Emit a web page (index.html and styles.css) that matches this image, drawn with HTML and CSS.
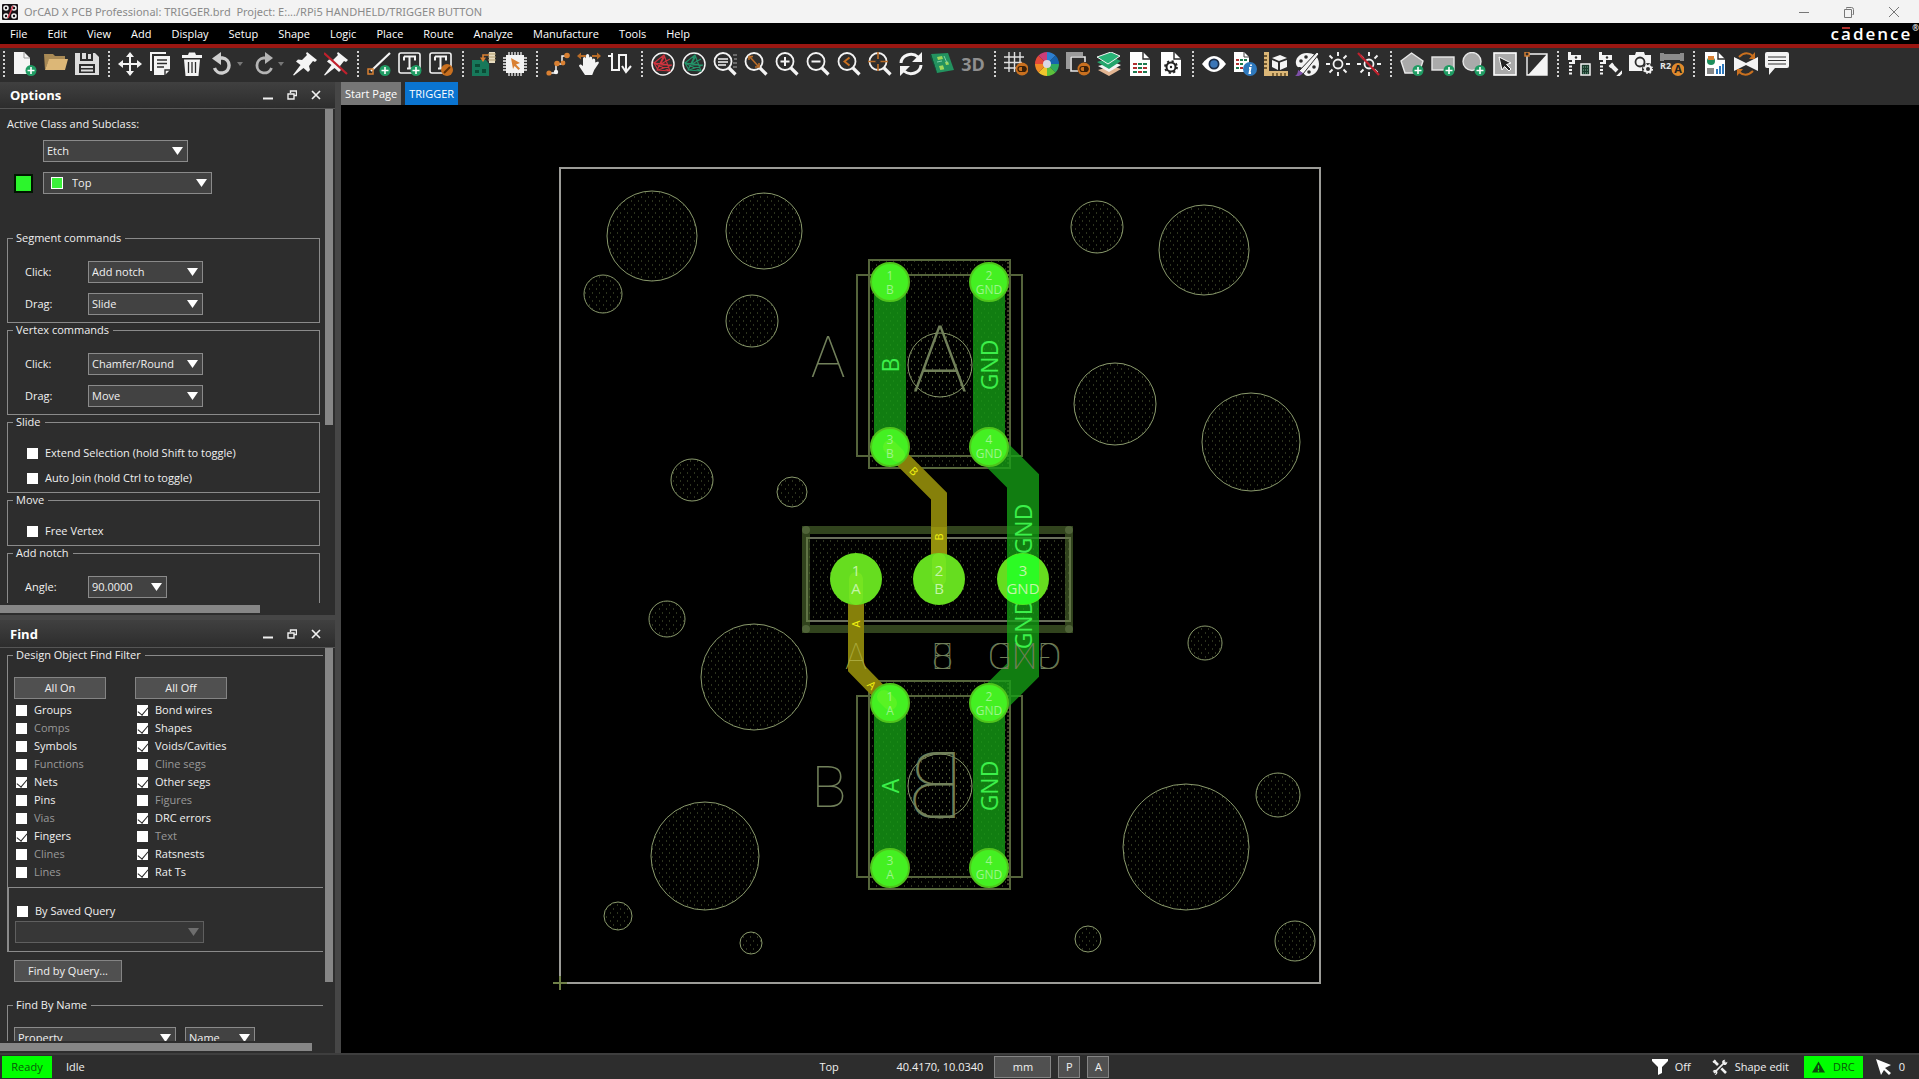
FILE: index.html
```html
<!DOCTYPE html>
<html lang="en">
<head>
<meta charset="utf-8">
<title>OrCAD X PCB Professional: TRIGGER.brd</title>
<link rel="stylesheet" href="styles.css">
</head>
<body>
<svg class="defs" aria-hidden="true">
  <defs>
    <symbol id="plus" viewBox="0 0 24 24"><circle cx="18" cy="18.500" r="5.500" fill="#1f9c63"/><path d="M18 15v7M14.500 18.500h7" stroke="#fff" stroke-width="1.600"/></symbol>
    <symbol id="toggle" viewBox="0 0 24 24"><circle cx="18" cy="17" r="6.500" fill="#c9701f"/><rect x="14" y="14.500" width="8" height="5" rx="2.500" fill="none" stroke="#3a2008" stroke-width="1.200"/><path d="M18 14.500h2a2.500 2.500 0 0 1 0 5h-2z" fill="#3a2008"/></symbol>
    <symbol id="lens" viewBox="0 0 24 24"><circle cx="10" cy="9.500" r="8.500" fill="none" stroke="#f4f4f4" stroke-width="1.800"/><path d="M16 16l6.500 6.500" stroke="#f4f4f4" stroke-width="3.200"/></symbol>
    <symbol id="net" viewBox="0 0 24 24"><circle cx="12" cy="12" r="11" fill="none" stroke="#f4f4f4" stroke-width="1.500"/><path d="M3 11L13 3l6 16-13-1 8-14M3 11l18 2L7 18 3 11l16 8M13 3L6 18M19 7L8 13l13 0" fill="none" stroke="currentColor" stroke-width="1.100"/></symbol>
    <symbol id="restore" viewBox="0 0 10 10"><path d="M3.500 3V1h6v4.500h-2M1 4h6v5H1z" fill="none" stroke="currentColor" stroke-width="1.400"/></symbol>
    <symbol id="close" viewBox="0 0 10 10"><path d="M1 1l8 8M9 1L1 9" stroke="currentColor" stroke-width="1.700"/></symbol>
    <symbol id="minimize" viewBox="0 0 10 10"><path d="M0 8.500h10" stroke="currentColor" stroke-width="2"/></symbol>
    <symbol id="tools" viewBox="0 0 24 24"><path d="M3 3l6 6M14 14l7 7" stroke="currentColor" stroke-width="4"/><path d="M1.500 5l3.500-3.500M3 21L20 4" stroke="currentColor" stroke-width="2.500"/><path d="M15 5a4.500 4.500 0 0 1 5-4l-2 3 2 2 3-2a4.500 4.500 0 0 1-5 5zM1 19a4 4 0 0 1 6-2l1 2a4 4 0 0 1-4 5l2-3-2-2z" fill="currentColor"/></symbol>
    <symbol id="caliper" viewBox="0 0 24 24"><path d="M1 0h3v3h10v5H8v4H5V8H1z" fill="#f4f4f4"/><circle cx="9" cy="5.500" r="1.200" fill="#2d2d2d"/><path d="M3.500 10v14" stroke="#f4f4f4" stroke-width="3" stroke-dasharray="2 1.500"/></symbol>
    <symbol id="sheet" viewBox="0 0 24 24"><path d="M2 0h13l7 7v17H2z" fill="#fff"/><path d="M15 0v7h7" fill="none" stroke="#2d2d2d" stroke-width="1.400"/></symbol>
    <symbol id="burst" viewBox="0 0 24 24"><circle cx="12" cy="12" r="4.500" fill="none" stroke="#f4f4f4" stroke-width="1.800"/><path d="M12 0v4M12 20v4M0 12h4M20 12h4M3.500 3.500l3 3M17.500 17.500l3 3M3.500 20.500l3-3M17.500 6.500l3-3" stroke="#f4f4f4" stroke-width="1.900"/></symbol>
    <symbol id="pin" viewBox="0 0 24 24"><path d="M14 0l10 8-2 2-2-1-4 5 1 4-2 2-4.500-4L1 23.500 0 23l7.500-10L3 9.500l2-2 4 .5 5-5-1-1.500z" fill="#f4f4f4"/></symbol>
    <symbol id="tbox" viewBox="0 0 24 24"><rect x="1" y="1" width="21" height="20" rx="2" fill="none" stroke="#f4f4f4" stroke-width="1.600"/><path d="M6 4.500h11v4M6 8.500v-4M11.500 4.500v12M9 16.500h5" fill="none" stroke="#f4f4f4" stroke-width="2"/></symbol>
    <pattern id="dots" width="7" height="8" patternUnits="userSpaceOnUse"><path d="M1 1h1M4 5h1" stroke="#59683c" stroke-width="1"/></pattern>
  </defs>
</svg>

<header class="titlebar">
  <svg class="appicon" viewBox="0 0 16 16"><rect width="16" height="16" rx="1" fill="#181216"/><g fill="none" stroke="#f3f3f3" stroke-width="1.600"><circle cx="4" cy="4" r="2"/><circle cx="12" cy="4" r="2"/><circle cx="4" cy="12" r="2"/><circle cx="12" cy="12" r="2"/></g><path d="M6 14L11 2" stroke="#d23c50" stroke-width="1.500"/></svg>
  <h1 class="title">OrCAD X PCB Professional: TRIGGER.brd&nbsp; Project: E:.../RPi5 HANDHELD/TRIGGER BUTTON</h1>
  <div class="winbtns">
    <button type="button" aria-label="Minimize"><svg viewBox="0 0 12 12"><path d="M1 6.500h10" stroke="#777"/></svg></button>
    <button type="button" aria-label="Restore"><svg viewBox="0 0 12 12"><path d="M3.500 2.500v-1h5q2 0 2 2v5h-1M1.500 3.500h7v8h-7z" fill="none" stroke="#777"/></svg></button>
    <button type="button" aria-label="Close"><svg viewBox="0 0 12 12"><path d="M1 1l10 10M11 1L1 11" stroke="#777"/></svg></button>
  </div>
</header>

<nav class="menubar">
  <a href="#">File</a><a href="#">Edit</a><a href="#">View</a><a href="#">Add</a><a href="#">Display</a><a href="#">Setup</a><a href="#">Shape</a><a href="#">Logic</a><a href="#">Place</a><a href="#">Route</a><a href="#">Analyze</a><a href="#">Manufacture</a><a href="#">Tools</a><a href="#">Help</a>
  <span class="brand">c<span class="bar">a</span>dence<sup>®</sup></span>
</nav>

<div class="toolbar">
  <i class="sep"></i>
  <button type="button" aria-label="New"><svg viewBox="0 0 24 24"><path d="M1 0h10l6 6v16H1z" fill="#f4f4f4"/><path d="M11 0v6h6" fill="none" stroke="#999"/><use href="#plus"/></svg></button>
  <button type="button" aria-label="Open"><svg viewBox="0 0 24 24"><path d="M0 2h9l2 2h10v4H5L1 18z" fill="#a98a55"/><path d="M5 7h19l-3 11H1z" fill="#dcb777"/></svg></button>
  <button type="button" aria-label="Save"><svg viewBox="0 0 24 24"><path d="M0 1h20l4 4v18H0z" fill="#dcdcdc"/><path d="M5 1h13v8H5zM4 12h16v9H4z" fill="#2d2d2d"/><path d="M7 1h4v6H7zM13 2h3v5h-3z" fill="#dcdcdc"/><path d="M6 15h12M6 18.500h12" stroke="#dcdcdc" stroke-width="1.800"/></svg></button>
  <i class="sep"></i>
  <button type="button" aria-label="Move"><svg viewBox="0 0 24 24"><path d="M12 3v18M3 12h18" stroke="#f4f4f4" stroke-width="2"/><path d="M12 0l4 5H8zM12 24l4-5H8zM0 12l5-4v8zM24 12l-5-4v8z" fill="#f4f4f4"/></svg></button>
  <button type="button" aria-label="Copy"><svg viewBox="0 0 24 24"><path d="M2 19V1h15" fill="none" stroke="#f4f4f4" stroke-width="2"/><path d="M5 4h16v14l-5 5H5z" fill="#f4f4f4"/><path d="M8 8h10M8 11.500h10M8 15h7M16 23v-5h5" fill="none" stroke="#2d2d2d" stroke-width="1.400"/></svg></button>
  <button type="button" aria-label="Delete"><svg viewBox="0 0 24 24"><path d="M2 3h6l1-2.500h6L16 3h6v3H2z" fill="#f4f4f4"/><path d="M4 7.500h16L18.500 24h-13z" fill="#f4f4f4"/><path d="M8.500 10v11M12 10v11M15.500 10v11" stroke="#2d2d2d" stroke-width="1.300"/></svg></button>
  <button type="button" aria-label="Undo"><svg viewBox="0 0 24 24"><path d="M8 6h3.500a7.500 7.500 0 1 1-8 10" fill="none" stroke="#cfcfcf" stroke-width="3.400"/><path d="M10 0v13L1 6.500z" fill="#cfcfcf"/></svg></button>
  <button type="button" class="drop" aria-label="Undo list"></button>
  <button type="button" aria-label="Redo"><svg viewBox="0 0 24 24"><path d="M15 6h-3.500a7.500 7.500 0 1 0 8 10" fill="none" stroke="#b5b5b5" stroke-width="2.800"/><path d="M13 0v12l8-6z" fill="#b5b5b5"/></svg></button>
  <button type="button" class="drop" aria-label="Redo list"></button>
  <button type="button" aria-label="Fix"><svg viewBox="0 0 24 24"><use href="#pin"/></svg></button>
  <button type="button" aria-label="Unfix"><svg viewBox="0 0 24 24"><use href="#pin"/><path d="M0 1l23 21" stroke="#c0202c" stroke-width="2.200"/></svg></button>
  <i class="sep"></i>
  <button type="button" aria-label="Add line"><svg viewBox="0 0 24 24"><path d="M4 19L23 1" stroke="#f4f4f4" stroke-width="2.200"/><rect x="1" y="17" width="5" height="5" fill="none" stroke="#d98032" stroke-width="1.500"/><use href="#plus"/></svg></button>
  <button type="button" aria-label="Add text"><svg viewBox="0 0 24 24"><use href="#tbox"/><use href="#plus"/></svg></button>
  <button type="button" aria-label="Edit text"><svg viewBox="0 0 24 24"><use href="#tbox"/><circle cx="18" cy="18" r="6" fill="#c9701f"/><path d="M15 21l6-6" stroke="#5b2f08" stroke-width="2"/></svg></button>
  <i class="sep"></i>
  <button type="button" aria-label="Place"><svg viewBox="0 0 24 24"><path d="M0 8h14l3 4v12H0z" fill="#17785a"/><path d="M3 12h5v3H3zM10 17h4v4h-4zM3 18h4v3H3z" fill="#0b4a35"/><path d="M11 9V3h6" fill="none" stroke="#d98032" stroke-width="1.600"/><path d="M8 5.500l3 4.500 3-4.500z" fill="#d98032"/><rect x="17" y="0" width="6" height="11" fill="#e8dcc0"/><path d="M16 2h8M16 5h8M16 8h8" stroke="#b29e70"/></svg></button>
  <button type="button" aria-label="Chip"><svg viewBox="0 0 24 24"><path d="M6 0v24M9 0v24M12 0v24M15 0v24M18 0v24M0 6h24M0 9h24M0 12h24M0 15h24M0 18h24" stroke="#f4f4f4" stroke-width="1.300"/><rect x="3" y="3" width="18" height="18" fill="#f4f4f4"/><path d="M8 6l9 5-4 1.500 4 4-1.500 1.500-4-4L10 17z" fill="#d98032"/></svg></button>
  <i class="sep"></i>
  <button type="button" aria-label="Add connect"><svg viewBox="0 0 24 24"><path d="M3 21h7V12h6V4h5" fill="none" stroke="#f4f4f4" stroke-width="1.500"/><circle cx="3" cy="21" r="2.600" fill="#d98032"/><circle cx="10" cy="20" r="2.200" fill="#f4f4f4"/><circle cx="11" cy="11.500" r="2.800" fill="#d98032"/><circle cx="17" cy="11" r="2.400" fill="#d98032"/><circle cx="21" cy="3.500" r="2.800" fill="#d98032"/></svg></button>
  <button type="button" aria-label="Slide"><svg viewBox="0 0 24 24"><path d="M1 4h8M15 4h8" stroke="#b86c28" stroke-width="2"/><path d="M0 4l4-3.500v7zM24 4l-4-3.500v7z" fill="#b86c28"/><path d="M6 14V6.500a1.500 1.500 0 0 1 3 0V3.500a1.600 1.600 0 0 1 3.200 0V6a1.500 1.500 0 0 1 3 0v2a1.500 1.500 0 0 1 3 0v2.500l3-1q1.500 1 0 2.500l-4 6-2 5H8l-6-9q0-2 2-1.500z" fill="#f4f4f4"/></svg></button>
  <button type="button" aria-label="Delay tune"><svg viewBox="0 0 24 24"><path d="M0 4h4M4 1v17h7V3h7v17" fill="none" stroke="#f4f4f4" stroke-width="2"/><path d="M0 4h5M14 14l4 6 5-6" fill="none" stroke="#f4f4f4" stroke-width="2"/></svg></button>
  <i class="sep"></i>
  <button type="button" class="red" aria-label="Unrats"><svg viewBox="0 0 24 24"><use href="#net"/></svg></button>
  <button type="button" class="teal" aria-label="Rats"><svg viewBox="0 0 24 24"><use href="#net"/></svg></button>
  <button type="button" aria-label="Zoom points"><svg viewBox="0 0 24 24"><use href="#lens"/><path d="M5 7h10M5 10h10M5 13h8" stroke="#f4f4f4" stroke-width="1.500"/><path d="M20 3h4M21 7h3M20 11h4M20 15h4" stroke="#aaa" stroke-width="1.200"/></svg></button>
  <button type="button" aria-label="Zoom fit"><svg viewBox="0 0 24 24"><use href="#lens"/><path d="M6 5l8 9M5 8V4.500h4M15 11v4h-4" fill="none" stroke="#b86c28" stroke-width="1.600"/></svg></button>
  <button type="button" aria-label="Zoom in"><svg viewBox="0 0 24 24"><use href="#lens"/><path d="M10 5v9M5.500 9.500h9" stroke="#f4f4f4" stroke-width="2"/></svg></button>
  <button type="button" aria-label="Zoom out"><svg viewBox="0 0 24 24"><use href="#lens"/><path d="M5.500 9.500h9" stroke="#f4f4f4" stroke-width="2"/></svg></button>
  <button type="button" aria-label="Zoom previous"><svg viewBox="0 0 24 24"><use href="#lens"/><path d="M12.500 5.500l-5 4 5 4" fill="none" stroke="#c9701f" stroke-width="1.900"/></svg></button>
  <button type="button" aria-label="Zoom center"><svg viewBox="0 0 24 24"><use href="#lens"/><path d="M10 0v19M0 9.500h20" stroke="#b86c28" stroke-width="1.700"/><path d="M10 7v5M7.500 9.500h5" stroke="#2d2d2d" stroke-width="2"/></svg></button>
  <button type="button" aria-label="Redraw"><svg viewBox="0 0 24 24"><path d="M2 11a10 9 0 0 1 17-6M22 13a10 9 0 0 1-17 6" fill="none" stroke="#f4f4f4" stroke-width="3"/><path d="M23 0v10H13zM1 24V14h10z" fill="#f4f4f4"/></svg></button>
  <button type="button" aria-label="Board view"><svg viewBox="0 0 24 24"><path d="M1 2l17-1 6 17-17 3z" fill="#23925f"/><path d="M1 2l6 19 .5 2L0 4z" fill="#0d5236"/><path d="M7 5l5-1 1 3-5 1zM15 10l3-.5 1 3-3 .5zM9 14l4-.7 1.300 4-4 .7z" fill="#9fd75a"/><path d="M14 4l3 7M7 10l5-1" stroke="#7fd0a8"/></svg></button>
  <button type="button" class="three" aria-label="3D view">3D</button>
  <i class="sep"></i>
  <button type="button" aria-label="Grid"><svg viewBox="0 0 24 24"><path d="M5 0v20M10.500 0v20M16 0v14M0 5h20M0 10.500h18M0 16h12" stroke="#e0e0e0" stroke-width="1.400"/><use href="#toggle"/></svg></button>
  <button type="button" aria-label="Color"><svg viewBox="0 0 24 24"><path d="M12 12V0a12 12 0 0 1 8.500 3.500z" fill="#2d7fd0"/><path d="M12 12l8.500-8.500A12 12 0 0 1 24 12z" fill="#1663ae"/><path d="M12 12h12a12 12 0 0 1-3.500 8.500z" fill="#2eaa62"/><path d="M12 12l8.500 8.500A12 12 0 0 1 12 24z" fill="#5cc13c"/><path d="M12 12v12a12 12 0 0 1-8.500-3.500z" fill="#f0c52d"/><path d="M12 12l-8.500 8.500A12 12 0 0 1 0 12z" fill="#f18b25"/><path d="M12 12H0a12 12 0 0 1 3.500-8.500z" fill="#e5493a"/><path d="M12 12L3.500 3.500A12 12 0 0 1 12 0z" fill="#cc3d78"/><circle cx="12" cy="12" r="4" fill="#d9d9e6"/></svg></button>
  <button type="button" aria-label="Shadow"><svg viewBox="0 0 24 24"><path d="M0 0h17v4H4v13H0z" fill="#9b9b9b"/><path d="M19 10V5H5v14h7" fill="none" stroke="#e6e6e6" stroke-width="1.600"/><use href="#toggle"/></svg></button>
  <button type="button" aria-label="Layers"><svg viewBox="0 0 24 24"><path d="M1 18l14-4 9 3-12 7z" fill="#e3b592"/><path d="M1 14l15-4 8 3-12 7z" fill="#f4f4f4"/><path d="M0 10l15-5 9 4-12 8z" fill="#24a56c"/><path d="M0 5l14-5 9 4-12 8z" fill="#29b477" stroke="#f4f4f4"/></svg></button>
  <button type="button" aria-label="Reports"><svg viewBox="0 0 24 24"><use href="#sheet"/><path d="M5 12h4M5 16h4M15 16h4M10 20h4" stroke="#b03030" stroke-width="2"/><path d="M10 12h4M15 12h4M10 16h4M5 20h4M15 20h4" stroke="#1d7a4f" stroke-width="2"/></svg></button>
  <button type="button" aria-label="Parameters"><svg viewBox="0 0 24 24"><use href="#sheet"/><circle cx="12" cy="15" r="4.500" fill="none" stroke="#222" stroke-width="2"/><circle cx="12" cy="15" r="6" fill="none" stroke="#222" stroke-width="1.800" stroke-dasharray="2.200 2.500"/><circle cx="12" cy="15" r="1.200" fill="#222"/></svg></button>
  <i class="sep"></i>
  <button type="button" aria-label="Visibility"><svg viewBox="0 0 24 24"><path d="M0 12q6-8 12-8t12 8q-6 8-12 8T0 12z" fill="#fff"/><circle cx="12" cy="12" r="5.500" fill="#1b2c46"/><circle cx="12" cy="12" r="3.800" fill="#3b76b8"/></svg></button>
  <button type="button" aria-label="Show element"><svg viewBox="0 0 24 24"><path d="M1 0h10l5 5v15H1z" fill="#fff"/><path d="M11 0v5h5" fill="none" stroke="#444"/><path d="M3 8h3M3 12h3M7 16h3" stroke="#b03030" stroke-width="2"/><path d="M7 8h3M7 12h3M3 16h3M11 8h3" stroke="#1d7a4f" stroke-width="2"/><circle cx="17" cy="17" r="7" fill="#2f79bd"/><path d="M18 12.500v1.500M16 16h1.500l-1 5H18" fill="none" stroke="#fff" stroke-width="1.800"/></svg></button>
  <button type="button" aria-label="Measure"><svg viewBox="0 0 24 24"><path d="M0 0h5v19h19v5H0z" fill="#dcb777"/><path d="M0 4h3M0 8h3M0 12h3M0 16h3M9 24v-3M13 24v-3M17 24v-3M21 24v-3" stroke="#4d3a18" stroke-width="1.300"/><path d="M8 6l8-3 7 3-8 3zM8 8l6 2.500V18l-6-3zM16 10.500L23 8v7l-7 3z" fill="#f4f4f4"/></svg></button>
  <button type="button" aria-label="Assign color"><svg viewBox="0 0 24 24"><path d="M12 1C4 1 0 7 1 12s5 2 6 4 1 8 6 8 11-4 11-12S18 1 12 1z" fill="#f4f4f4"/><g fill="#2d2d2d"><circle cx="6" cy="9" r="1.800"/><circle cx="11" cy="5" r="1.800"/><circle cx="14" cy="20" r="1.800"/><circle cx="19" cy="15" r="1.800"/></g><path d="M4 19L22 0l2 2L8 22z" fill="#f4f4f4" stroke="#2d2d2d"/><path d="M0 24q3-2 3-6l5 3q-3 4-8 3z" fill="#7d4fa8"/></svg></button>
  <button type="button" aria-label="Highlight"><svg viewBox="0 0 24 24"><use href="#burst"/></svg></button>
  <button type="button" aria-label="Dehighlight"><svg viewBox="0 0 24 24"><use href="#burst"/><path d="M1 1l21 22" stroke="#c0202c" stroke-width="2.200"/></svg></button>
  <i class="sep"></i>
  <button type="button" aria-label="Polygon"><svg viewBox="0 0 24 24"><path d="M11.500 1L23 9l-4 12H5L1 9z" fill="#aaa" stroke="#e8e8e8" stroke-width="1.400"/><use href="#plus"/></svg></button>
  <button type="button" aria-label="Rectangle"><svg viewBox="0 0 24 24"><rect x="1" y="5" width="22" height="13" fill="#aaa" stroke="#e8e8e8" stroke-width="1.400"/><use href="#plus"/></svg></button>
  <button type="button" aria-label="Circle"><svg viewBox="0 0 24 24"><circle cx="10" cy="9.500" r="9" fill="#aaa" stroke="#e8e8e8" stroke-width="1.400"/><use href="#plus"/></svg></button>
  <button type="button" aria-label="Select shape"><svg viewBox="0 0 24 24"><rect x="1" y="1" width="22" height="22" fill="#aaa" stroke="#fff" stroke-width="1.600"/><path d="M6 5l12 6-4.500 1.500L18 17l-2 2-4.500-4.500L9 18z" fill="#222" stroke="#fff"/></svg></button>
  <button type="button" aria-label="Shape void"><svg viewBox="0 0 24 24"><path d="M3 23V2h20v21z" fill="#2d2d2d" stroke="#f4f4f4" stroke-width="1.400"/><path d="M23 2v21H4z" fill="#f4f4f4"/><rect x="1" y="0" width="4" height="4" fill="#2d2d2d" stroke="#d98032" stroke-width="1.400"/></svg></button>
  <i class="sep"></i>
  <button type="button" aria-label="Constraints"><svg viewBox="0 0 24 24"><use href="#caliper"/><rect x="14" y="12" width="9" height="11" fill="#1b3a2c" stroke="#f4f4f4" stroke-width="1.500"/><path d="M16 15h5M16 18h5M16 21h5" stroke="#7fb79a" stroke-dasharray="1 1"/></svg></button>
  <button type="button" aria-label="Constraint modes"><svg viewBox="0 0 24 24"><use href="#caliper"/><svg x="10" y="10" width="14" height="14" viewBox="0 0 24 24" color="#f4f4f4"><use href="#tools"/></svg></svg></button>
  <button type="button" aria-label="Snapshot"><svg viewBox="0 0 24 24"><path d="M0 3h6l1-3h8l1 3h6v16H0z" fill="#f4f4f4"/><circle cx="11" cy="10" r="4.500" fill="none" stroke="#2d2d2d" stroke-width="1.800"/><circle cx="19" cy="17" r="6" fill="#2d2d2d"/><circle cx="19" cy="17" r="3" fill="none" stroke="#f4f4f4" stroke-width="2"/><circle cx="19" cy="17" r="4.300" fill="none" stroke="#f4f4f4" stroke-width="1.500" stroke-dasharray="1.700 1.700"/></svg></button>
  <button type="button" aria-label="Auto rename"><svg viewBox="0 0 24 24"><path d="M0 1h4v1h16V1h4v8h-4V8H4v1H0z" fill="#8c8c8c"/><text x="0" y="17" class="r2">R2</text><circle cx="18" cy="17.500" r="6.500" fill="#e08a2c"/><text x="18" y="21" class="badge">A</text></svg></button>
  <i class="sep"></i>
  <button type="button" aria-label="Design report"><svg viewBox="0 0 24 24"><use href="#sheet"/><circle cx="8" cy="9" r="4" fill="#1d8d5c"/><path d="M5 4h6v4H5z" fill="#d98032"/><path d="M4 16h7v6H4z" fill="#888"/><path d="M14 22v-5M17 22v-8M20 22V12" stroke="#2f79bd" stroke-width="2"/></svg></button>
  <button type="button" aria-label="Cross probe"><svg viewBox="0 0 24 24"><path d="M0 5l12 6 12-6v14l-12-6-12 6z" fill="#f4f4f4"/><path d="M5 5q7-7 14-1M19 19q-7 7-14 1" fill="none" stroke="#c9701f" stroke-width="2"/><path d="M21 0v7h-6zM3 24v-7h6z" fill="#c9701f"/></svg></button>
  <button type="button" aria-label="Comments"><svg viewBox="0 0 24 24"><path d="M2 0h20q2 0 2 2v12q0 2-2 2H10l-6 7v-7H2q-2 0-2-2V2q0-2 2-2z" fill="#f4f4f4"/><path d="M3 5h18M3 8.500h18M3 12h18" stroke="#333" stroke-width="1.200"/></svg></button>
</div>

<div class="workspace">
  <aside class="dock">
    <section class="panel options">
      <header class="phead"><h2>Options</h2>
        <button type="button" aria-label="Collapse"><svg><use href="#minimize"/></svg></button><button type="button" aria-label="Float"><svg><use href="#restore"/></svg></button><button type="button" aria-label="Close panel"><svg><use href="#close"/></svg></button>
      </header>
      <div class="pbody">
        <p class="lead">Active Class and Subclass:</p>
        <div class="classrow"><i class="nochip"></i><span class="pick w145"><select aria-label="Active class"><option>Etch</option></select></span></div>
        <div class="classrow"><i class="swatch"></i><span class="pick w169 layer"><select aria-label="Active subclass"><option>Top</option></select></span></div>
        <div class="groups">
          <fieldset><legend>Segment commands</legend>
            <div class="field"><label for="sc">Click:</label><span class="pick w115"><select id="sc"><option>Add notch</option></select></span></div>
            <div class="field"><label for="sd">Drag:</label><span class="pick w115"><select id="sd"><option>Slide</option></select></span></div>
          </fieldset>
          <fieldset><legend>Vertex commands</legend>
            <div class="field"><label for="vc">Click:</label><span class="pick w115"><select id="vc"><option>Chamfer/Round</option></select></span></div>
            <div class="field"><label for="vd">Drag:</label><span class="pick w115"><select id="vd"><option>Move</option></select></span></div>
          </fieldset>
          <fieldset class="checks"><legend>Slide</legend>
            <label class="check"><input type="checkbox">Extend Selection (hold Shift to toggle)</label>
            <label class="check"><input type="checkbox">Auto Join (hold Ctrl to toggle)</label>
          </fieldset>
          <fieldset class="checks"><legend>Move</legend>
            <label class="check"><input type="checkbox">Free Vertex</label>
          </fieldset>
          <fieldset class="tall"><legend>Add notch</legend>
            <div class="field"><label for="an">Angle:</label><span class="pick w79"><select id="an"><option>90.0000</option></select></span></div>
          </fieldset>
        </div>
      </div>
      <div class="vbar"><i></i></div>
      <div class="hbar"><i></i></div>
    </section>

    <section class="panel find">
      <header class="phead"><h2>Find</h2>
        <button type="button" aria-label="Collapse"><svg><use href="#minimize"/></svg></button><button type="button" aria-label="Float"><svg><use href="#restore"/></svg></button><button type="button" aria-label="Close panel"><svg><use href="#close"/></svg></button>
      </header>
      <div class="pbody">
        <fieldset class="open"><legend>Design Object Find Filter</legend>
          <div class="filter">
            <div class="col">
              <button type="button" class="btn">All On</button>
              <label class="check"><input type="checkbox">Groups</label>
              <label class="check off"><input type="checkbox" disabled>Comps</label>
              <label class="check"><input type="checkbox">Symbols</label>
              <label class="check off"><input type="checkbox" disabled>Functions</label>
              <label class="check"><input type="checkbox" checked>Nets</label>
              <label class="check"><input type="checkbox">Pins</label>
              <label class="check off"><input type="checkbox" disabled>Vias</label>
              <label class="check"><input type="checkbox" checked>Fingers</label>
              <label class="check off"><input type="checkbox" disabled>Clines</label>
              <label class="check off"><input type="checkbox" disabled>Lines</label>
            </div>
            <div class="col">
              <button type="button" class="btn">All Off</button>
              <label class="check"><input type="checkbox" checked>Bond wires</label>
              <label class="check"><input type="checkbox" checked>Shapes</label>
              <label class="check"><input type="checkbox" checked>Voids/Cavities</label>
              <label class="check off"><input type="checkbox" disabled>Cline segs</label>
              <label class="check"><input type="checkbox" checked>Other segs</label>
              <label class="check off"><input type="checkbox" disabled>Figures</label>
              <label class="check"><input type="checkbox" checked>DRC errors</label>
              <label class="check off"><input type="checkbox" disabled>Text</label>
              <label class="check"><input type="checkbox" checked>Ratsnests</label>
              <label class="check"><input type="checkbox" checked>Rat Ts</label>
            </div>
          </div>
          <div class="saved">
            <label class="check"><input type="checkbox">By Saved Query</label>
            <span class="pick w189 dim"><select aria-label="Saved query" disabled><option></option></select></span>
          </div>
        </fieldset>
        <button type="button" class="btn query">Find by Query...</button>
        <fieldset class="open"><legend>Find By Name</legend>
          <div class="byname"><span class="pick w162"><select aria-label="Find by"><option>Property</option></select></span><span class="pick w70"><select aria-label="Match on"><option>Name</option></select></span></div>
        </fieldset>
      </div>
      <div class="vbar"><i></i></div>
      <div class="hbar"><i></i></div>
    </section>
  </aside>

  <main class="editor">
    <div class="tabs"><button type="button">Start Page</button><button type="button" class="active">TRIGGER</button></div>
    <svg class="board" viewBox="341 105 1578 948">
      <g fill="url(#dots)" stroke="#8a9a6c" stroke-width="1">
        <circle cx="652" cy="236" r="45"/><circle cx="764" cy="231" r="38"/><circle cx="603" cy="294" r="19"/><circle cx="752" cy="321" r="26"/><circle cx="1097" cy="227" r="26"/><circle cx="1204" cy="250" r="45"/><circle cx="1115" cy="404" r="41"/><circle cx="1251" cy="442" r="49"/><circle cx="692" cy="480" r="21"/><circle cx="792" cy="492" r="15"/><circle cx="667" cy="619" r="18"/><circle cx="754" cy="677" r="53"/><circle cx="705" cy="856" r="54"/><circle cx="618" cy="916" r="14"/><circle cx="751" cy="943" r="11"/><circle cx="1205" cy="643" r="17"/><circle cx="1278" cy="795" r="22"/><circle cx="1186" cy="847" r="63"/><circle cx="1088" cy="939" r="13"/><circle cx="1295" cy="941" r="20"/>
      </g>
      <rect x="560" y="168" width="760" height="815" fill="none" stroke="#9c9c98" stroke-width="2"/>
      <path d="M553 983h14M560 976v14" stroke="#6f8048" stroke-width="2"/>

      <g id="switch-a">
        <rect x="869" y="260" width="141" height="208" fill="url(#dots)"/>
        <rect x="869" y="260" width="141" height="208" fill="none" stroke="#56663c" stroke-width="2"/>
        <rect x="857" y="275" width="165" height="181" fill="none" stroke="#55643b" stroke-width="2"/>
        <path d="M1008 262v204" stroke="#7d7d4a" stroke-dasharray="2 2"/>
        <circle cx="940" cy="365" r="32" fill="url(#dots)" stroke="#8a9a6c"/>
      </g>
      <use href="#switch-a" y="421"/>

      <rect x="807" y="538" width="263" height="83" fill="url(#dots)" stroke="#6a6f5c" stroke-width="2"/>
      <rect x="806" y="530" width="263" height="99" fill="none" stroke="#5a7a34" stroke-opacity=".55" stroke-width="8"/>
      <g fill="#4f6338"><circle cx="806" cy="530" r="4"/><circle cx="1069" cy="530" r="4"/><circle cx="806" cy="629" r="4"/><circle cx="1069" cy="629" r="4"/></g>

      <g fill="none" stroke="#16a016" stroke-opacity=".78" stroke-width="32">
        <path d="M890 282v165M989 282v165M890 703v165M989 703v165"/>
        <path d="M989 447l34 34v189l-34 34"/>
      </g>
      <g fill="none" stroke="#86800a" stroke-width="16">
        <path d="M890 447l49 49v83M856 579v89l34 35"/>
      </g>
      <path d="M939 527v40" stroke="#a0a010" stroke-width="16" stroke-opacity=".5"/>
      <g class="silk">
        <text x="940" y="392" class="s92">A</text>
        <text x="828" y="377" class="s58">A</text>
        <text transform="translate(936 818) scale(-1 1)" class="s92">B</text>
        <text x="829" y="807" class="s58">B</text>
        <text x="856" y="669" class="s38 lit">A</text>
        <text x="942" y="669" class="s38">B</text>
        <text transform="translate(943 669) scale(-1 1)" class="s38">B</text>
        <text x="1024" y="669" class="s38">GND</text>
        <text transform="translate(1025 669) scale(-1 1)" class="s38">GND</text>
      </g>
      <g class="net">
        <text transform="translate(899 365) rotate(-90)">B</text>
        <text transform="translate(998 365) rotate(-90)">GND</text>
        <text transform="translate(899 786) rotate(-90)">A</text>
        <text transform="translate(998 786) rotate(-90)">GND</text>
        <text transform="translate(1032 529) rotate(-90)">GND</text>
        <text transform="translate(1032 624) rotate(-90)">GND</text>
      </g>
      <g class="net gold">
        <text transform="translate(943 537) rotate(-90)">B</text>
        <text transform="translate(860 624) rotate(-90)">A</text>
        <text transform="translate(911 474) rotate(45)">B</text>
        <text transform="translate(869 688) rotate(45)">A</text>
      </g>
      <g fill="#44f022" stroke="#4fc41c" stroke-width="2">
        <circle cx="890" cy="282" r="19"/><circle cx="989" cy="282" r="19"/><circle cx="890" cy="447" r="19"/><circle cx="989" cy="447" r="19"/>
        <circle cx="890" cy="703" r="19"/><circle cx="989" cy="703" r="19"/><circle cx="890" cy="868" r="19"/><circle cx="989" cy="868" r="19"/>
      </g>
      <g fill="#66dd1f"><circle cx="856" cy="579" r="26"/><circle cx="939" cy="579" r="26"/><circle cx="1023" cy="579" r="26"/></g>
      <path d="M1007 559a26 26 0 0 1 32 0v40a26 26 0 0 1-32 0z" fill="#2cfb24"/>
      <g fill="none" stroke="#8cf022" stroke-opacity=".4" stroke-width="14" stroke-linecap="round"><path d="M856 579v19M939 579v-19"/></g>
      <g fill="none" stroke="#7af826" stroke-opacity=".4" stroke-width="14" stroke-linecap="round"><path d="M890 447l8 8M884 697l6 6"/></g>
      <g class="padtext">
        <text x="890" y="280">1</text><text x="890" y="294">B</text><text x="989" y="280">2</text><text x="989" y="294">GND</text>
        <text x="890" y="444">3</text><text x="890" y="458">B</text><text x="989" y="444">4</text><text x="989" y="458">GND</text>
        <text x="890" y="701">1</text><text x="890" y="715">A</text><text x="989" y="701">2</text><text x="989" y="715">GND</text>
        <text x="890" y="865">3</text><text x="890" y="879">A</text><text x="989" y="865">4</text><text x="989" y="879">GND</text>
      </g>
      <g class="padtext big">
        <text x="856" y="576">1</text><text x="856" y="594">A</text><text x="939" y="576">2</text><text x="939" y="594">B</text><text x="1023" y="576">3</text><text x="1023" y="594">GND</text>
      </g>
    </svg>
  </main>
</div>

<footer class="status">
  <div class="left"><span class="ready">Ready</span><span>Idle</span></div>
  <div class="mid"><span class="lay">Top</span><span class="xy">40.4170, 10.0340</span><button type="button" class="btn unit">mm</button><button type="button" class="btn sq">P</button><button type="button" class="btn sq">A</button></div>
  <div class="right">
    <span class="item"><svg viewBox="0 0 16 16"><path d="M0 0h16v2L10 8v6l-4 2V8L0 2z" fill="#fff"/></svg>Off</span>
    <span class="item"><svg viewBox="0 0 24 24"><use href="#tools"/></svg>Shape edit</span>
    <span class="drc"><svg viewBox="0 0 14 12"><path d="M7 0l7 12H0z" fill="#0a4a0a"/><path d="M7 4v4M7 9v2" stroke="#0f0" stroke-width="1.400"/></svg>DRC</span>
    <span class="item"><svg viewBox="0 0 16 16"><path d="M0 0l15 6-6 3 6 5-2 2-5-5-3 5z" fill="#fff"/></svg>0</span>
  </div>
</footer>
</body>
</html>
```

FILE: styles.css
```css
* { box-sizing: border-box; }
html, body { height: 100%; }
body {
  margin: 0;
  display: flex;
  flex-direction: column;
  background: #2d2d2d;
  color: #f0f0f0;
  font: 11px/16px "Open Sans", "Noto Sans", sans-serif;
  overflow: hidden;
}
h1, h2, p { margin: 0; font-weight: 400; }
button, select, input { font: inherit; color: inherit; margin: 0; padding: 0; border: 0; border-radius: 0; background: none; }
svg { display: block; }
.defs { position: absolute; width: 0; height: 0; }

.titlebar { display: flex; align-items: center; height: 23px; flex: none; background: #f3f3f3; color: #8a8a8a; padding-left: 2px; }
.appicon { width: 16px; height: 16px; margin-right: 6px; }
.title { font: 11px/16px "Noto Sans", sans-serif; }
.winbtns { margin-left: auto; display: flex; margin-right: 3px; }
.winbtns button { width: 45px; height: 20px; display: grid; place-items: center; }
.winbtns svg { width: 12px; height: 12px; }

.menubar { display: flex; align-items: center; height: 25px; flex: none; background: #000; border-bottom: 4px solid #9a1712; }
.menubar a { color: #fff; text-decoration: none; padding: 0 10px; }
.brand { margin-left: auto; display: flex; font: 600 17px/20px "Open Sans", sans-serif; letter-spacing: 2px; color: #fff; }
.brand .bar { background: linear-gradient(#b0302c, #b0302c) 1px 3px / 8px 2px no-repeat; }
.brand sup { font-size: 8px; line-height: 8px; letter-spacing: 0; }

.toolbar { display: flex; align-items: center; gap: 7px; height: 34px; flex: none; padding: 0 0 2px 1px; overflow: hidden; }
.toolbar button { width: 24px; height: 24px; flex: none; }
.toolbar svg { width: 24px; height: 24px; }
.toolbar .sep { width: 5px; height: 26px; flex: none; background: repeating-linear-gradient(#d0d0d0 0 2px, transparent 2px 4px) 2px 0 / 2px 100% no-repeat; }
.toolbar .drop { width: 10px; margin-left: -7px; display: grid; place-items: center; }
.drop::before { content: ""; width: 6px; height: 4px; background: #777; clip-path: polygon(0 0, 100% 0, 50% 100%); }
.toolbar .three { font: 700 18px/24px "Open Sans", sans-serif; color: #8f8f8f; }
.red { color: #d2343f; }
.teal { color: #23946a; }
.r2 { font: 700 9px "Open Sans", sans-serif; fill: #e6e6e6; }
.badge { font: 700 11px "Open Sans", sans-serif; text-anchor: middle; fill: #222; }

.workspace { flex: 1; min-height: 0; display: flex; }
.dock { width: 341px; flex: none; display: flex; flex-direction: column; border-right: 6px solid #464646; }
.panel { display: grid; min-height: 0; grid-template: auto minmax(0, 1fr) 12px / minmax(0, 1fr) 12px; overflow: hidden; }
.options { flex: 533; }
.find { flex: 438; }
.options .phead { height: 27px; }
.find .phead { height: 33px; padding-top: 6px; background: linear-gradient(#464646 0 5px, #404040 5px, #2d2d2d); }
.phead { grid-column: 1 / 3; display: flex; align-items: center; gap: 14px; padding: 0 14px 0 10px; background: linear-gradient(#404040, #2d2d2d); border-bottom: 1px solid #555; }
.phead h2 { font-size: 13px; font-weight: 700; color: #fff; margin-right: auto; }
.phead svg { width: 10px; height: 10px; }
.pbody { overflow: hidden; }
.vbar i { display: block; width: 8px; background: #868686; margin-left: 2px; }
.options .vbar i { height: 64%; }
.find .vbar i { height: 85%; }
.hbar { grid-column: 1 / 3; padding-top: 2px; }
.hbar i { display: block; height: 8px; background: #868686; width: 260px; }
.find .hbar i { width: 312px; }

.lead { margin: 7px 0 8px 7px; }
.classrow { display: flex; align-items: center; height: 22px; margin-bottom: 10px; padding-left: 14px; gap: 10px; }
.swatch, .nochip { width: 19px; height: 19px; }
.swatch { background: #2cf52c; border: 2px solid #001500; }
.groups { padding: 27px 3px 0 7px; }
fieldset { margin: 0; min-width: 0; border: 1px solid #8a8a8a; padding: 16px 0 7px 17px; display: grid; gap: 10px; }
legend { line-height: 14px; padding: 0 4px 0 3px; margin-left: -12px; }
.field { display: grid; grid-template-columns: 63px auto; justify-content: start; align-items: center; }
.checks { gap: 9px; padding-bottom: 6px; }
.tall { padding-bottom: 40px; }

.pick { display: inline-grid; height: 22px; align-items: center; }
.pick select, .pick::after, .pick::before { grid-area: 1 / 1; }
.pick select { appearance: none; width: 100%; height: 22px; background: #424242; border: 1px solid #8a8a8a; padding: 0 18px 0 3px; line-height: 20px; }
.pick::after { content: ""; width: 11px; height: 8px; justify-self: end; margin-right: 5px; background: #fff; clip-path: polygon(0 0, 100% 0, 50% 100%); pointer-events: none; z-index: 1; }
.layer::before { content: ""; width: 10px; height: 10px; margin-left: 8px; background: #3af03a; border: 1px solid #fff; z-index: 1; }
.layer select { padding-left: 28px; }
.dim::after { background: #6e6e6e; }
.dim select { background: #3c3c3c; border-color: #757575; }
.w145 { width: 145px; }
.w169 { width: 169px; }
.w115 { width: 115px; }
.w79 { width: 79px; }
.w189 { width: 189px; }
.w162 { width: 162px; }
.w70 { width: 70px; }

.check { display: flex; align-items: center; gap: 7px; height: 16px; padding-left: 2px; }
.check input { appearance: none; width: 11px; height: 11px; background: #fff; display: grid; }
.check input:checked::before { content: ""; width: 5px; height: 9px; border: solid #222; border-width: 0 1px 1px 0; transform: rotate(40deg); justify-self: center; }
.off { color: #999; }
.btn { height: 22px; background: #505050; border: 1px solid #848484; }

.find .open { border-width: 1px 0 0 1px; margin: 0 0 0 7px; padding: 15px 0 0; gap: 0; }
.open legend { margin-left: 5px; }
.filter { display: grid; grid-template-columns: 92px 92px; gap: 29px; padding-left: 6px; }
.col { display: grid; grid-template-rows: 24px; grid-auto-rows: 18px; align-items: center; }
.col .btn { align-self: start; }
.saved { margin-top: 6px; border: 1px solid #8a8a8a; border-right: 0; height: 65px; padding: 15px 0 0 6px; display: grid; grid-template-rows: 18px 22px; justify-items: start; }
.query { display: block; width: 108px; margin: 8px 0 16px 14px; }
.byname { display: flex; gap: 9px; padding-left: 6px; height: 40px; align-items: flex-start; }

.editor { flex: 1; min-width: 0; display: flex; flex-direction: column; }
.tabs { display: flex; gap: 4px; height: 23px; flex: none; }
.tabs button { padding: 0 4px; background: #767676; color: #fff; }
.tabs .active { background: #0a74d0; }
.board { flex: 1; min-height: 0; width: 100%; background: #000; }
.silk { font-family: "Roboto", sans-serif; font-weight: 100; fill: #71805a; text-anchor: middle; }
.s92 { font-size: 92px; }
.s58 { font-size: 58px; }
.s38 { font-size: 36px; }
.lit { fill: #a9a83a; }
.net { font: 23px "Open Sans", sans-serif; fill: #3cf04a; text-anchor: middle; }
.gold { font-size: 11px; fill: #f0f010; }
.padtext { font: 12px "Open Sans", sans-serif; fill: #9bf58a; text-anchor: middle; }
.big { font-size: 15px; fill: #c4f5a8; }

.status { display: flex; align-items: center; height: 26px; flex: none; border-top: 2px solid #3e3e3e; line-height: 18px; }
.left { width: 42.7%; display: flex; align-items: center; gap: 14px; padding-left: 2px; }
.ready { width: 50px; height: 22px; background: #0f0; color: #0a5a0a; line-height: 22px; text-align: center; }
.mid { display: flex; align-items: center; }
.lay { width: 77px; }
.xy { width: 98px; }
.unit { width: 57px; margin-right: 7px; }
.sq { width: 22px; margin-right: 7px; }
.right { margin-left: auto; display: flex; align-items: center; padding-right: 14px; }
.item, .drc { display: flex; align-items: center; gap: 7px; }
.item { margin-left: 13px; }
.right svg { width: 16px; height: 16px; }
.right .drc svg { width: 13px; height: 12px; }
.item + .item { margin-left: 21px; }
.drc { height: 22px; padding: 0 8px; gap: 8px; margin-left: 15px; background: #0f0; color: #0a5a0a; }
```
